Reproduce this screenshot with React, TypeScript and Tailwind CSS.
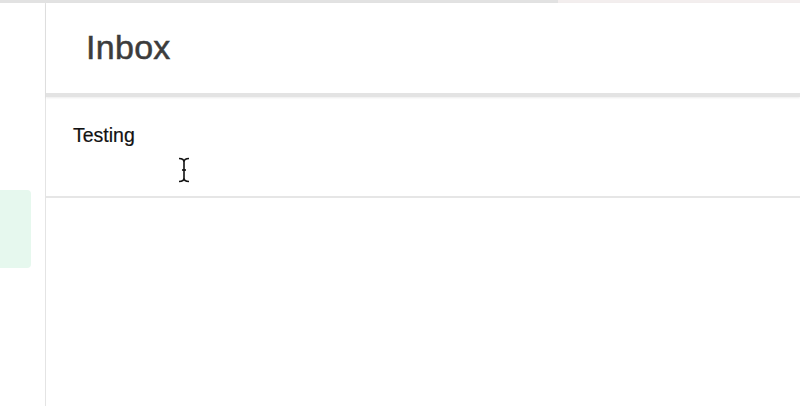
import React from 'react';

const App: React.FC = () => {
  return (
    <div className="w-[800px] h-[406px] overflow-hidden bg-white flex flex-col font-['Liberation_Sans',Arial,sans-serif]">
      {/* top strip */}
      <div className="flex h-[3px] shrink-0">
        <div className="w-[558px] bg-[#e2e2e2]" />
        <div className="flex-1 bg-[#f3eeee]" />
      </div>

      <div className="flex flex-1">
        {/* left rail */}
        <div className="w-[46px] shrink-0 border-r border-[#e4e4e4] pt-[187px]">
          <div className="w-[31px] h-[78px] bg-[#e6f8ee] rounded-r-[4px]" />
        </div>

        {/* main */}
        <div className="flex-1 flex flex-col">
          <div className="h-[94px] shrink-0 flex items-center pl-[40px] pb-[2px] border-b-[4px] border-[#e3e3e3] shadow-[0_1px_2px_rgba(0,0,0,0.08)]">
            <h1 className="text-[34px] tracking-[0.3px] text-[#3c3c3c] [-webkit-text-stroke:0.5px_#3c3c3c]">Inbox</h1>
          </div>
          <div className="h-[101px] shrink-0 border-b-2 border-[#e6e6e6] pl-[27px] pt-[24px] relative">
            <p className="text-[19.5px] text-[#111] [-webkit-text-stroke:0.2px_#111]">Testing</p>
            <svg className="absolute left-[132px] top-[60px]" width="12" height="26" viewBox="0 0 12 26" fill="none" stroke="#111" strokeWidth="1.6">
              <path d="M1 1.5 Q6 1.5 6 5 Q6 1.5 11 1.5" />
              <path d="M6 5 V21" />
              <path d="M4 13 H8" />
              <path d="M1 24.5 Q6 24.5 6 21 Q6 24.5 11 24.5" />
            </svg>
          </div>
          <div className="flex-1" />
        </div>
      </div>
    </div>
  );
};

export default App;
